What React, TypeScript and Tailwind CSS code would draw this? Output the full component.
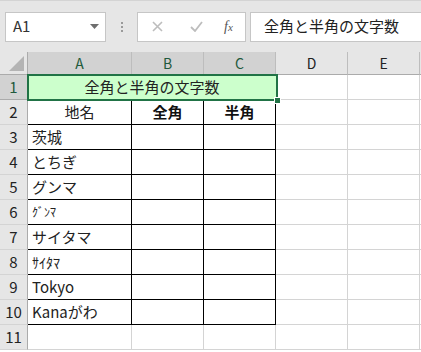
import React from "react";

interface RowData {
  a: string
  b?: string
  c?: string
  kind?: "head" | "body" | "none"
  size?: string
}

const rows: RowData[] = [
  { a: "地名", b: "全角", c: "半角", kind: "head" },
  { a: "茨城", kind: "body" },
  { a: "とちぎ", kind: "body" },
  { a: "グンマ", kind: "body" },
  { a: "ｸﾞﾝﾏ", kind: "body", size: "text-[12px]" },
  { a: "サイタマ", kind: "body" },
  { a: "ｻｲﾀﾏ", kind: "body", size: "text-[14px]" },
  { a: "Tokyo", kind: "body" },
  { a: "Kanaがわ", kind: "body" },
  { a: "", kind: "none" },
];

const font = { fontFamily: '"Noto Sans CJK JP", "Noto Sans", sans-serif' };

const Toolbar: React.FC = () => {
  return (
    <div className="flex items-center h-[52px] pb-[11px] pt-[11px] border-t border-[#d4d4d4] bg-[#e6e6e6]">
      <div className="ml-[5px] w-[101px] h-[30px] bg-white border border-[#c6c6c6] flex items-center justify-between pl-[7px] pr-[6px]">
        <span className="text-[15px] text-[#333]">A1</span>
        <svg width="9" height="5" viewBox="0 0 9 5"><path d="M0 0h9L4.5 5z" fill="#6e6e6e" /></svg>
      </div>
      <div className="w-[31px] flex flex-col items-center gap-[2px]">
        <div className="w-[2px] h-[2px] bg-[#9a9a9a]" />
        <div className="w-[2px] h-[2px] bg-[#9a9a9a]" />
        <div className="w-[2px] h-[2px] bg-[#9a9a9a]" />
      </div>
      <div className="w-[109px] h-[30px] bg-white border border-[#c6c6c6] flex items-center">
        <svg className="ml-[14px]" width="11" height="11" viewBox="0 0 11 11"><path d="M1 1l9 9M10 1l-9 9" stroke="#bdbdbd" strokeWidth="1.6" /></svg>
        <svg className="ml-[27px]" width="13" height="11" viewBox="0 0 13 11"><path d="M1 6l4 4 7-9" stroke="#bdbdbd" strokeWidth="1.8" fill="none" /></svg>
        <span className="ml-[21px] text-[14px] italic text-[#555]" style={{ fontFamily: '"Liberation Serif", serif' }}>
          f<span className="text-[11px]">x</span>
        </span>
      </div>
      <div className="ml-[4px] flex-1 h-[30px] bg-white border border-[#c6c6c6] border-r-0 flex items-center pl-[13px]">
        <span className="text-[15px] text-[#222]">全角と半角の文字数</span>
      </div>
    </div>
  );
};

const App: React.FC = () => {
  const cols = [
    { name: "A", w: "w-[104px]", sel: true },
    { name: "B", w: "w-[72px]", sel: true },
    { name: "C", w: "w-[72px]", sel: true },
    { name: "D", w: "w-[72px]", sel: false },
    { name: "E", w: "w-[72px]", sel: false },
  ];

  return (
    <div className="w-[421px] h-[352px] overflow-hidden bg-white" style={font}>
      <Toolbar />
      <div className="relative">
        {/* column headers */}
        <div className="flex h-[23px]">
          <div className="w-[28px] shrink-0 bg-[#e6e6e6] border-r border-b border-[#ababab] relative">
            <svg className="absolute right-[3px] bottom-[3px]" width="15" height="15" viewBox="0 0 15 15"><path d="M15 0v15H0z" fill="#b4b4b4" /></svg>
          </div>
          {cols.map((c) => (
            <div
              key={c.name}
              className={`${c.w} shrink-0 flex items-center justify-center text-[14px] border-r border-b ${c.sel ? "bg-[#d2d2d2] text-[#1f5a3c] border-r-[#bdbdbd] border-b-[#217346]" : "bg-[#e6e6e6] text-[#222] border-r-[#bdbdbd] border-b-[#ababab]"}`}
            >
              {c.name}
            </div>
          ))}
          <div className="flex-1 bg-[#e6e6e6] border-b border-[#ababab]" />
        </div>

        {/* row 1 merged */}
        <div className="flex h-[25px]">
          <div className="w-[28px] shrink-0 bg-[#d2d2d2] border-r border-b border-[#ababab] border-r-[#217346] flex items-center justify-center text-[15px] text-[#1f5a3c]">1</div>
          <div className="w-[248px] shrink-0 bg-[#ccffcc] flex items-center justify-center text-[15px] text-[#222]">全角と半角の文字数</div>
          <div className="w-[72px] shrink-0 border-r border-b border-[#d4d4d4]" />
          <div className="w-[72px] shrink-0 border-r border-b border-[#d4d4d4]" />
          <div className="flex-1 border-b border-[#d4d4d4]" />
        </div>

        {rows.map((r, i) => {
          const table = r.kind !== "none";
          const line = table ? "border-[#000]" : "border-[#d4d4d4]";
          return (
            <div key={i} className="flex h-[25px]">
              <div className="w-[28px] shrink-0 bg-[#e6e6e6] border-r border-b border-[#ababab] border-b-[#d4d4d4] flex items-center justify-center text-[15px] text-[#222]">
                {i + 2}
              </div>
              <div
                className={`w-[104px] shrink-0 border-r border-b ${line} flex items-center ${r.kind === "head" ? "justify-center" : "pl-[4px]"} ${r.size ?? "text-[15px]"} text-[#222] whitespace-nowrap`}
              >
                {r.a}
              </div>
              <div className={`w-[72px] shrink-0 border-r border-b ${line} flex items-center justify-center text-[15px] font-bold text-[#111]`}>
                {r.b}
              </div>
              <div className={`w-[72px] shrink-0 border-r border-b ${line} flex items-center justify-center text-[15px] font-bold text-[#111]`}>
                {r.c}
              </div>
              <div className="w-[72px] shrink-0 border-r border-b border-[#d4d4d4]" />
              <div className="w-[72px] shrink-0 border-r border-b border-[#d4d4d4]" />
              <div className="flex-1 border-b border-[#d4d4d4]" />
            </div>
          );
        })}

        {/* selection outline */}
        <div className="absolute left-[27px] top-[22px] w-[251px] h-[27px] border-2 border-[#217346] pointer-events-none">
          <div className="absolute right-[-5px] bottom-[-5px] w-[7px] h-[7px] bg-[#217346] border border-white" />
        </div>
      </div>
    </div>
  );
};

export default App;
